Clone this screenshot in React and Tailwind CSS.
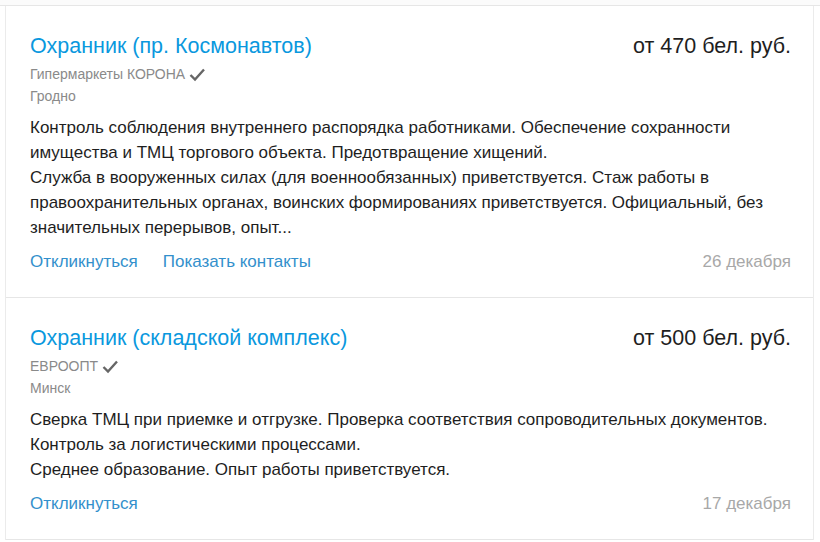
import React from 'react';

const vacancies = [
    {
        title: 'Охранник (пр. Космонавтов)',
        salary: 'от 470 бел. руб.',
        company: 'Гипермаркеты КОРОНА',
        city: 'Гродно',
        lines: [
            'Контроль соблюдения внутреннего распорядка работниками. Обеспечение сохранности имущества и ТМЦ торгового объекта. Предотвращение хищений.',
            'Служба в вооруженных силах (для военнообязанных) приветствуется. Стаж работы в правоохранительных органах, воинских формированиях приветствуется. Официальный, без значительных перерывов, опыт...',
        ],
        contacts: true,
        date: '26 декабря',
    },
    {
        title: 'Охранник (складской комплекс)',
        salary: 'от 500 бел. руб.',
        company: 'ЕВРООПТ',
        city: 'Минск',
        lines: [
            'Сверка ТМЦ при приемке и отгрузке. Проверка соответствия сопроводительных документов. Контроль за логистическими процессами.',
            'Среднее образование. Опыт работы приветствуется.',
        ],
        contacts: false,
        date: '17 декабря',
    },
];

const Check = () => (
    <svg width="18" height="15" viewBox="0 0 18 15" className="ml-[3px] inline-block">
        <path d="M2.5 8 L7 12.5 L16 2.5" fill="none" stroke="#666" strokeWidth="2.4" />
    </svg>
);

const VacancyCard = ({ item }) => (
    <div className="border-b border-[#e6e6e6] pt-[24px] pb-[23px] pl-[24px] pr-[22px]">
        <div className="flex items-center justify-between h-[32px]">
            <a className="text-[21.5px] text-[#0a98de] leading-[32px]">{item.title}</a>
            <span className="text-[21.5px] text-[#1e1e1e] leading-[32px]">{item.salary}</span>
        </div>
        <div className="mt-[1px] flex items-center text-[14px] leading-[22px] text-[#8a8a8a]">
            {item.company}
            <Check />
        </div>
        <div className="text-[14px] leading-[22px] text-[#8a8a8a]">{item.city}</div>
        <div className="mt-[8px] text-[17px] leading-[25px] text-[#1e1e1e]">
            {item.lines.map((l, i) => (
                <p key={i}>{l}</p>
            ))}
        </div>
        <div className="mt-[10px] flex items-center justify-between text-[17px] leading-[24px]">
            <div className="flex gap-[25px] text-[#3390cc]">
                <a>Откликнуться</a>
                {item.contacts && <a>Показать контакты</a>}
            </div>
            <span className="text-[#a8a8a8]">{item.date}</span>
        </div>
    </div>
);

export default function App() {
    return (
        <div className="w-[820px] h-[542px] bg-white overflow-hidden" style={{ fontFamily: '"Liberation Sans", Arial, sans-serif' }}>
            <div className="h-[6px] bg-[#fbfbfb] border-b border-[#e6e6e6]"></div>
            <div className="ml-[5px] w-[809px] border-x border-[#ebebeb]">
                {vacancies.map((v, i) => (
                    <VacancyCard key={i} item={v} />
                ))}
            </div>
        </div>
    );
}
